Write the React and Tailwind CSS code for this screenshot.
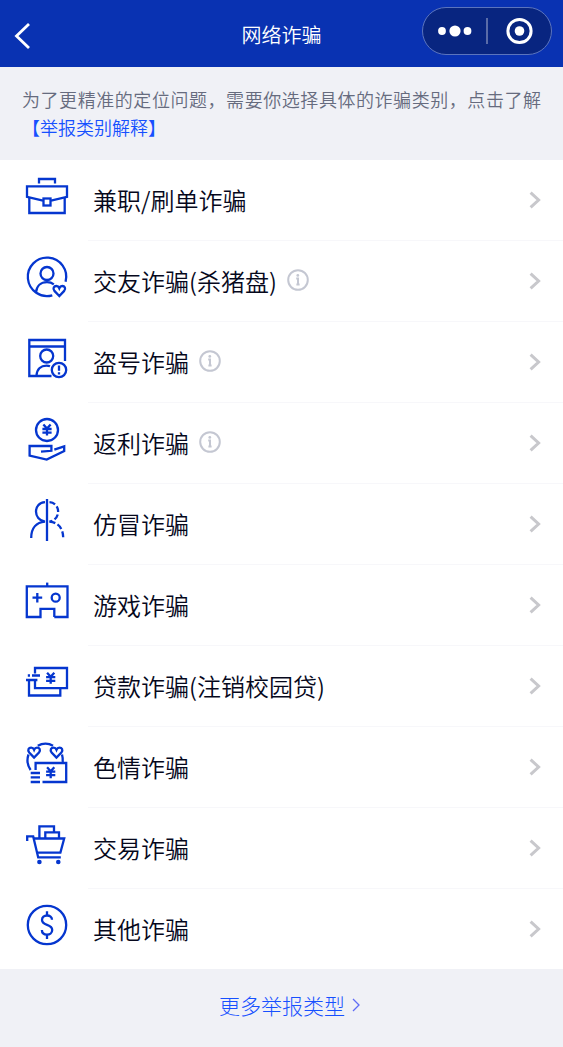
import React from "react";

function Heart({ x, y }) {
  return (
    <path
      transform={`translate(${x} ${y})`}
      d="M6.7 11 L1.8 5.9 C-0.2 3.4 1.4 1 3.7 1 C5.2 1 6.2 2 6.7 3.2 C7.2 2 8.2 1 9.7 1 C12 1 13.6 3.4 11.6 5.9 Z"
    />
  );
}

function Yen({ x, y }) {
  return (
    <path
      transform={`translate(${x} ${y})`}
      d="M-3.6 -5.4 L0 -1.4 L3.6 -5.4 M0 -1.4 V5.6 M-4.6 -1 H4.6 M-4.6 2.6 H4.6"
    />
  );
}

const icons = {
  briefcase: (
    <>
      <path d="M16 11.5 V7 H32 V11.5" />
      <path d="M20 28.6 L4 24.8 V14.3 H44 V24.8 L28 28.6" />
      <path d="M6.3 25.5 V41 H41.7 V25.5" />
      <rect x="20.5" y="26.5" width="7" height="7" />
    </>
  ),
  friend: (
    <>
      <path d="M42.6 28.7 A19.2 19.2 0 1 0 29.3 42.3" />
      <circle cx="24" cy="20.5" r="6.5" />
      <path d="M13 39.5 C13.5 33 18 29.2 24 29.2 C27 29.2 29 29.9 30.8 31.3" />
      <Heart x={29.6} y={32} />
    </>
  ),
  account: (
    <>
      <path d="M42 27 V6 H6.3 V42 H28.5" />
      <path d="M6.3 12.5 H42" />
      <circle cx="23.7" cy="22" r="6.5" />
      <path d="M13.5 41.5 C14 35 18 31.6 23.5 31.6 C25 31.6 26 31.8 27 32.2" />
      <circle cx="36" cy="36" r="7.2" />
      <path d="M36 31.4 V36.8 M36 38.2 V40.4" />
    </>
  ),
  rebate: (
    <>
      <circle cx="24" cy="15" r="11" />
      <Yen x={24} y={15} />
      <path d="M18 36.6 L28.4 35.8 V31 H6.6 V40.7 L23.7 44.6 L41.2 36 V31.4 L31.3 34.6" />
    </>
  ),
  imitation: (
    <>
      <path d="M24 3 V45" />
      <path d="M22 6.2 C10 7 10 24 22 25.6 C13.5 26.3 8.2 32 8.2 42" />
      <path d="M26.5 6.2 C38 7 38 24 26.5 25.6" strokeDasharray="6 2.5" />
      <path d="M26.5 25.6 C35 26.3 40.2 32 40.2 42" strokeDasharray="6 2.5" />
    </>
  ),
  game: (
    <>
      <path d="M31.3 40 H44.5 V9.3 H3.8 V40 H17.5 V31.8 H31.3 V40" />
      <path d="M24.2 5.6 V9" />
      <path d="M9.5 20.7 H19.2 M14.3 15.9 V25.5" />
      <circle cx="32.7" cy="20.7" r="4" />
    </>
  ),
  loan: (
    <>
      <path d="M12 15.5 V10 H44 V30.2 H12 V22" />
      <path d="M3 22 H14.4 M4.8 17.5 H7 M9 17.5 H17" />
      <path d="M6 22 V37.5 H37.3 V30.5" />
      <Yen x={27.7} y={20.2} />
    </>
  ),
  adult: (
    <>
      <path d="M5.5 15.5 C3.6 21 4.5 26.5 7.6 31" />
      <path d="M14.8 6.8 C19.5 4 25.6 4 30 6.8" />
      <path d="M39 15.5 C39.7 18 40 20.5 39.7 23" />
      <Heart x={4.4} y={7.6} />
      <Heart x={26.8} y={7.6} />
      <path d="M12.6 31 V24 H43.2 V43 H19.5" />
      <path d="M7.7 34 H17 M7.7 38.4 H17 M7.7 43 H17" />
      <Yen x={27.7} y={33.6} />
    </>
  ),
  trade: (
    <>
      <path d="M4.2 21 V16.4 H10.2 L15.2 37.4 H37.8" />
      <path d="M10.8 18.5 H41.2 L37.4 32.6 H14" />
      <path d="M16.4 18 V6.3 H31 V12.3 M22.3 18 V12.3 H36 V18" />
      <circle cx="16.4" cy="42" r="2.3" fill="currentColor" stroke="none" />
      <circle cx="35.3" cy="42" r="2.3" fill="currentColor" stroke="none" />
    </>
  ),
  other: (
    <>
      <circle cx="24" cy="24" r="19.2" />
      <path d="M24 10.2 V14.5 M24 33.6 V38" />
      <path d="M29 18.8 C29 16.2 26.8 14.5 24 14.5 C21.2 14.5 19 16.3 19 19 C19 25.2 29.2 22.4 29.2 28.9 C29.2 31.8 26.9 33.6 24 33.6 C21 33.6 18.9 31.8 18.9 29" />
    </>
  ),
};

const categories = [
  { icon: "briefcase", label: "兼职/刷单诈骗" },
  { icon: "friend", label: "交友诈骗(杀猪盘)", info: true },
  { icon: "account", label: "盗号诈骗", info: true },
  { icon: "rebate", label: "返利诈骗", info: true },
  { icon: "imitation", label: "仿冒诈骗" },
  { icon: "game", label: "游戏诈骗" },
  { icon: "loan", label: "贷款诈骗(注销校园贷)" },
  { icon: "adult", label: "色情诈骗" },
  { icon: "trade", label: "交易诈骗" },
  { icon: "other", label: "其他诈骗" },
];

function Header() {
  return (
    <header className="grid grid-cols-[1fr_auto_1fr] bg-[#0932b2] pt-[7px] pb-2 text-white">
      <button type="button" aria-label="返回" className="mt-1 ml-3 flex h-12 w-6 items-center justify-self-start">
        <svg className="h-7 w-5" viewBox="0 0 20 28" fill="none" stroke="currentColor" strokeWidth="2.8">
          <path d="M17 3 L4.5 15 L17 27" />
        </svg>
      </button>
      <h1 className="mt-1 flex h-12 items-center text-xl font-[350]">网络诈骗</h1>
      <div className="mr-[11px] flex h-12 w-[130px] items-center justify-self-end rounded-full border border-[#5b74bd] bg-[#082580]">
        <button type="button" aria-label="更多" className="flex h-full flex-1 items-center justify-center">
          <svg className="h-3 w-9" viewBox="0 0 36 12" fill="currentColor">
            <circle cx="5" cy="6" r="3.9" />
            <circle cx="18" cy="6" r="5.6" />
            <circle cx="30.5" cy="6" r="3.9" />
          </svg>
        </button>
        <span className="h-[26px] w-0.5 bg-[#5a6ca8]" />
        <button type="button" aria-label="关闭" className="flex h-full flex-1 items-center justify-center">
          <svg className="h-7 w-7" viewBox="0 0 28 28" fill="none">
            <circle cx="13.5" cy="14" r="11.6" stroke="currentColor" strokeWidth="3" />
            <circle cx="13.5" cy="14" r="4.8" fill="currentColor" />
          </svg>
        </button>
      </div>
    </header>
  );
}

function CategoryRow({ icon, label, info, last }) {
  return (
    <li className="flex pl-[23px]">
      <svg
        className="mt-3 h-12 w-12 shrink-0 text-[#0536cf]"
        viewBox="0 0 48 48"
        fill="none"
        stroke="currentColor"
        strokeWidth="2.3"
        aria-hidden="true"
      >
        {icons[icon]}
      </svg>
      <div
        className={
          "ml-[17px] box-content flex h-20 flex-1 items-center pr-[22px] pl-[5px] " +
          (last ? "" : "border-b border-[#f7f7fa]")
        }
      >
        <a href="#report" className="text-2xl font-[350] text-[#06081c]">
          {label}
        </a>
        {info && (
          <button type="button" aria-label={label + "说明"} className="mb-0.5 ml-[10px] text-[#c4c7d2]">
            <svg className="h-[22px] w-[22px]" viewBox="0 0 22 22" fill="none" stroke="currentColor" strokeWidth="2">
              <circle cx="11" cy="11" r="9.8" />
              <path d="M9.2 9.4 H11 V15.6 M9.4 15.4 H12.6" />
              <circle cx="10.8" cy="6.4" r="1.4" fill="currentColor" stroke="none" />
            </svg>
          </button>
        )}
        <svg
          className="ml-auto h-[18px] w-3"
          viewBox="0 0 12 18"
          fill="none"
          stroke="#c8c8cc"
          strokeWidth="3"
          aria-hidden="true"
        >
          <path d="M1.6 1.6 L9.6 9 L1.6 16.4" />
        </svg>
      </div>
    </li>
  );
}

export default function App() {
  return (
    <div className="min-h-screen bg-[#f0f1f6] font-['Noto_Sans_CJK_SC',sans-serif]">
      <Header />
      <p className="px-[22px] pt-[18px] pb-[19px] text-justify text-lg/7 font-[350] text-[#666b7e]">
        为了更精准的定位问题，需要你选择具体的诈骗类别，点击了解
        <a href="#explain" className="text-[#1650ff]">【举报类别解释】</a>
      </p>
      <ul className="bg-white">
        {categories.map((c, i) => (
          <CategoryRow key={c.label} {...c} last={i === categories.length - 1} />
        ))}
      </ul>
      <footer className="flex justify-center py-[22px]">
        <a href="#more" className="flex items-center gap-[7px] pl-4 text-[21px]/7 font-light text-[#1650ff]">
          更多举报类型
          <svg className="h-3.5 w-2" viewBox="0 0 8 14" fill="none" stroke="#5f6cf5" strokeWidth="1.3" aria-hidden="true">
            <path d="M1 1 L7 7 L1 13" />
          </svg>
        </a>
      </footer>
    </div>
  );
}
